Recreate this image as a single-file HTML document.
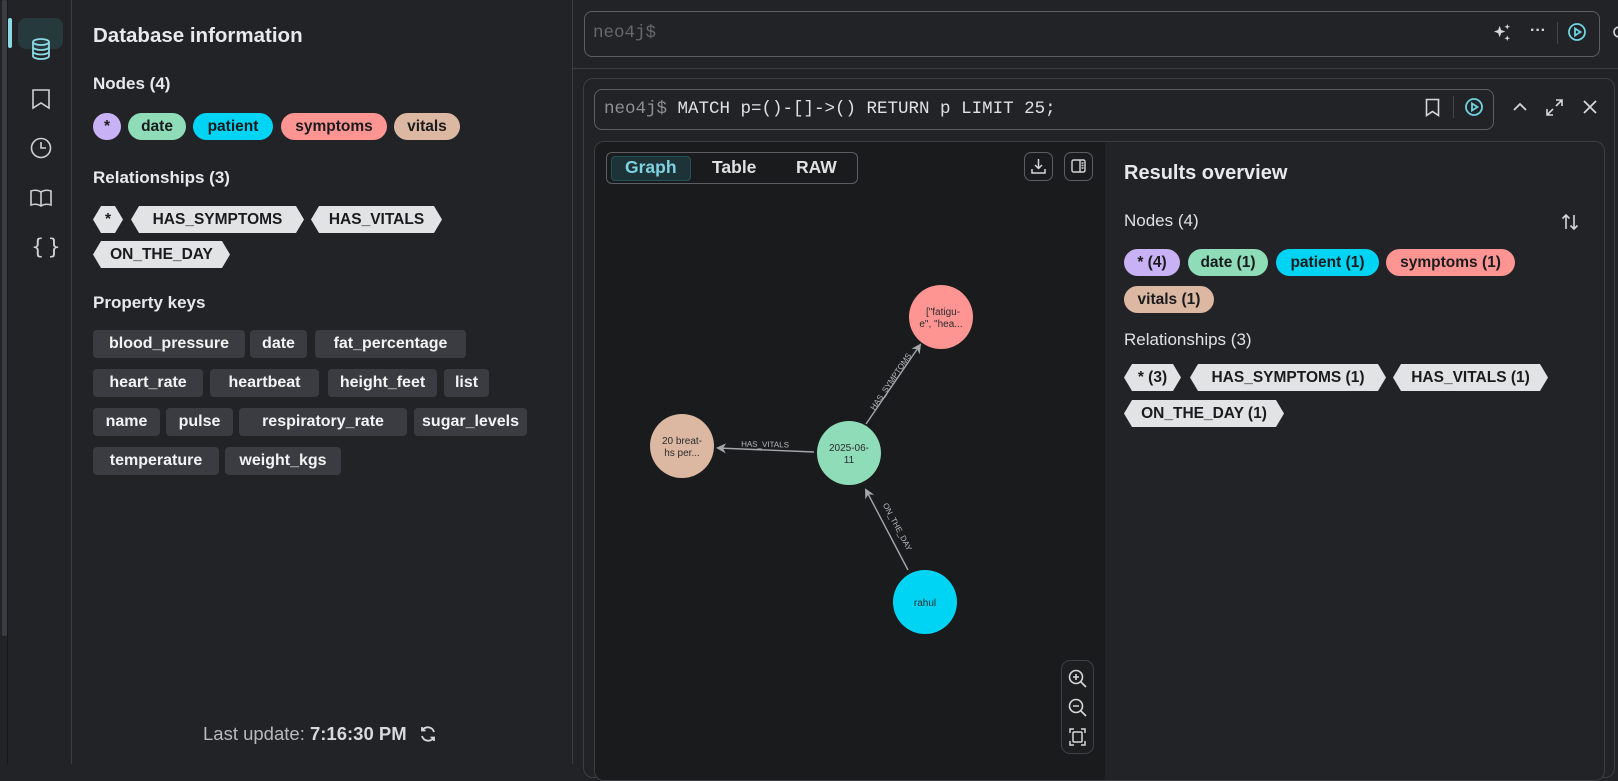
<!DOCTYPE html>
<html><head><meta charset="utf-8">
<style>
*{box-sizing:border-box;margin:0;padding:0}
body{width:1618px;height:764px;overflow:hidden;background:#222326;font-family:"Liberation Sans",sans-serif;color:#e8e9ea;position:relative}
.abs{position:absolute}
.pill{position:absolute;height:27px;border-radius:14px;color:#1a1b1d;font-weight:bold;font-size:15.5px;line-height:27px;text-align:center}
.hex{position:absolute;height:27px;background:#e2e3e5;color:#1a1b1d;font-weight:bold;font-size:15.5px;line-height:27px;text-align:center;clip-path:polygon(8px 0,calc(100% - 8px) 0,100% 50%,calc(100% - 8px) 100%,8px 100%,0 50%)}
.key{position:absolute;height:28px;background:#3a3c41;border-radius:4px;color:#f2f3f4;font-weight:bold;font-size:16px;line-height:28px;text-align:center;white-space:nowrap}
.h{position:absolute;font-weight:bold;font-size:17px;color:#e8e9ea}
svg{position:absolute;overflow:visible}
</style></head><body>
<!-- rail -->
<div class="abs" style="left:0;top:0;width:72px;height:764px;background:#222326;border-right:1px solid #3c3d42"></div>
<div class="abs" style="left:2px;top:0;width:5px;height:636px;background:#3b3c42;border-radius:2px"></div>
<div class="abs" style="left:7px;top:0;width:1px;height:764px;background:#17181a"></div>
<div class="abs" style="left:8px;top:18px;width:4px;height:30px;background:#8ad9e4;border-radius:2px"></div>
<div class="abs" style="left:18px;top:18px;width:45px;height:31px;background:#26393c;border-radius:8px"></div>
<svg style="left:29px;top:37px" width="24" height="24" viewBox="0 0 24 24" fill="none" stroke="#8ad9e4" stroke-width="1.8"><ellipse cx="12" cy="5" rx="8" ry="3"/><path d="M4 5v14c0 1.7 3.6 3 8 3s8-1.3 8-3V5M4 10c0 1.7 3.6 3 8 3s8-1.3 8-3M4 14.5c0 1.7 3.6 3 8 3s8-1.3 8-3"/></svg>
<svg style="left:31px;top:88px" width="20" height="22" viewBox="0 0 20 22" fill="none" stroke="#cfd0d2" stroke-width="1.6"><path d="M2 2h16v18l-8-5-8 5z"/></svg>
<svg style="left:30px;top:137px" width="22" height="22" viewBox="0 0 22 22" fill="none" stroke="#cfd0d2" stroke-width="1.6"><circle cx="11" cy="11" r="9.5"/><path d="M11 5v6h5"/></svg>
<svg style="left:29px;top:188px" width="24" height="20" viewBox="0 0 24 20" fill="none" stroke="#cfd0d2" stroke-width="1.6"><path d="M12 4C9 2 5 2 2 3v14c3-1 7-1 10 1 3-2 7-2 10-1V3c-3-1-7-1-10 1zM12 4v14"/></svg>
<div class="abs" style="left:31px;top:235px;font-size:21px;color:#cfd0d2;font-family:'DejaVu Sans',sans-serif;letter-spacing:3px">{}</div>

<!-- sidebar -->
<div class="abs" style="left:572px;top:0;width:1px;height:764px;background:#3c3d42"></div>
<div class="abs" style="left:93px;top:24px;font-weight:bold;font-size:20.5px">Database information</div>
<div class="h" style="left:93px;top:74px">Nodes (4)</div>
<div class="pill" style="left:93px;top:113px;width:28px;background:#c9b1f5">*</div>
<div class="pill" style="left:128px;top:113px;width:58px;background:#8fdcb9">date</div>
<div class="pill" style="left:193px;top:113px;width:80px;background:#00d4f5">patient</div>
<div class="pill" style="left:281px;top:113px;width:106px;background:#ff9593">symptoms</div>
<div class="pill" style="left:394px;top:113px;width:66px;background:#dcb8a2">vitals</div>
<div class="h" style="left:93px;top:168px">Relationships (3)</div>
<div class="hex" style="left:93px;top:206px;width:30px">*</div>
<div class="hex" style="left:131px;top:206px;width:173px">HAS_SYMPTOMS</div>
<div class="hex" style="left:311px;top:206px;width:131px">HAS_VITALS</div>
<div class="hex" style="left:93px;top:241px;width:137px">ON_THE_DAY</div>
<div class="h" style="left:93px;top:293px">Property keys</div>
<div class="key" style="left:93px;top:330px;width:152px">blood_pressure</div>
<div class="key" style="left:250px;top:330px;width:57px">date</div>
<div class="key" style="left:315px;top:330px;width:151px">fat_percentage</div>
<div class="key" style="left:93px;top:369px;width:110px">heart_rate</div>
<div class="key" style="left:210px;top:369px;width:109px">heartbeat</div>
<div class="key" style="left:328px;top:369px;width:109px">height_feet</div>
<div class="key" style="left:444px;top:369px;width:45px">list</div>
<div class="key" style="left:93px;top:408px;width:67px">name</div>
<div class="key" style="left:166px;top:408px;width:67px">pulse</div>
<div class="key" style="left:239px;top:408px;width:168px">respiratory_rate</div>
<div class="key" style="left:414px;top:408px;width:113px">sugar_levels</div>
<div class="key" style="left:93px;top:447px;width:126px">temperature</div>
<div class="key" style="left:225px;top:447px;width:116px">weight_kgs</div>
<div class="abs" style="left:203px;top:723px;font-size:18.5px;color:#b8b9bc">Last update: <b style="color:#d8d9db">7:16:30 PM</b></div>
<svg style="left:419px;top:725px" width="18" height="18" viewBox="0 0 18 18" fill="none" stroke="#d8d9db" stroke-width="1.8"><path d="M15 7A6.5 6.5 0 0 0 3.5 5M3 11a6.5 6.5 0 0 0 11.5 2M3 2v3.5h3.5M15 16v-3.5h-3.5"/></svg>

<!-- main top -->
<div class="abs" style="left:573px;top:0;width:1045px;height:69px;background:#222326;border-bottom:1px solid #3c3d42"></div>
<div class="abs" style="left:584px;top:11px;width:1016px;height:46px;border:1px solid #5c5e63;border-radius:8px"></div>
<div class="abs" style="left:593px;top:23px;font-family:'Liberation Mono',monospace;font-size:17.5px;color:#66686c">neo4j$</div>
<svg style="left:1493px;top:23px" width="19" height="19" viewBox="0 0 20 20" fill="#d6d7d9"><path d="M7 3l1.6 4.4L13 9l-4.4 1.6L7 15l-1.6-4.4L1 9l4.4-1.6zM15 1l.8 2.2L18 4l-2.2.8L15 7l-.8-2.2L12 4l2.2-.8zM15 13l.8 2.2L18 16l-2.2.8L15 19l-.8-2.2L12 16l2.2-.8z"/></svg>
<div class="abs" style="left:1530px;top:22px;font-size:16px;color:#d6d7d9;font-weight:bold">···</div>
<div class="abs" style="left:1557px;top:22px;width:1px;height:22px;background:#45474b"></div>
<svg style="left:1568px;top:23px" width="18" height="18" viewBox="0 0 18 18" fill="none" stroke="#6fd3e2" stroke-width="1.8"><circle cx="9" cy="9" r="8"/><path d="M7 5.5v7l5.5-3.5z"/></svg>
<svg style="left:1611px;top:24px" width="14" height="16" viewBox="0 0 14 16" fill="none" stroke="#d6d7d9" stroke-width="1.6"><circle cx="8" cy="8" r="5"/></svg>

<!-- card -->
<div class="abs" style="left:583px;top:78px;width:1032px;height:700px;border:1px solid #3c3d42;border-radius:10px;background:#222326"></div>
<div class="abs" style="left:594px;top:89px;width:900px;height:41px;border:1px solid #5c5e63;border-radius:8px"></div>
<div class="abs" style="left:604px;top:99px;font-family:'Liberation Mono',monospace;font-size:17.5px;color:#e0e1e3;white-space:pre"><span style="color:#8e9094">neo4j$</span> MATCH p=()-[]-&gt;() RETURN p LIMIT 25;</div>
<svg style="left:1425px;top:98px" width="15" height="19" viewBox="0 0 15 19" fill="none" stroke="#d6d7d9" stroke-width="1.6"><path d="M1.5 1.5h12v16l-6-4-6 4z"/></svg>
<div class="abs" style="left:1453px;top:96px;width:1px;height:22px;background:#45474b"></div>
<svg style="left:1465px;top:98px" width="18" height="18" viewBox="0 0 18 18" fill="none" stroke="#6fd3e2" stroke-width="1.8"><circle cx="9" cy="9" r="8"/><path d="M7 5.5v7l5.5-3.5z"/></svg>
<svg style="left:1513px;top:102px" width="14" height="9" viewBox="0 0 14 9" fill="none" stroke="#d6d7d9" stroke-width="1.8"><path d="M1 8l6-6 6 6"/></svg>
<svg style="left:1546px;top:99px" width="17" height="17" viewBox="0 0 17 17" fill="none" stroke="#d6d7d9" stroke-width="1.6"><path d="M10 1h6v6M16 1l-6 6M7 16H1v-6M1 16l6-6"/></svg>
<svg style="left:1583px;top:100px" width="14" height="14" viewBox="0 0 14 14" fill="none" stroke="#d6d7d9" stroke-width="1.8"><path d="M1 1l12 12M13 1L1 13"/></svg>

<!-- result area -->
<div class="abs" style="left:594px;top:141px;width:1011px;height:640px;border:1px solid #3c3d42;border-radius:10px;overflow:hidden;background:#222326">
  <div class="abs" style="left:0;top:0;width:510px;height:640px;background:#1a1b1d"></div>
</div>
<div class="abs" style="left:606px;top:152px;width:252px;height:32px;border:1px solid #5c5e63;border-radius:6px"></div>
<div class="abs" style="left:611px;top:156px;width:80px;height:25px;background:#1d3338;border:1px solid #24505a;border-radius:4px"></div>
<div class="abs" style="left:625px;top:157px;font-weight:bold;font-size:17.5px;color:#7fd3e0">Graph</div>
<div class="abs" style="left:712px;top:157px;font-weight:bold;font-size:17.5px;color:#e0e1e3">Table</div>
<div class="abs" style="left:796px;top:157px;font-weight:bold;font-size:17.5px;color:#e0e1e3">RAW</div>
<div class="abs" style="left:1024px;top:152px;width:29px;height:29px;border:1px solid #5c5e63;border-radius:7px"></div>
<svg style="left:1031px;top:158px" width="15" height="16" viewBox="0 0 15 16" fill="none" stroke="#d6d7d9" stroke-width="1.5"><path d="M7.5 1v9M4 7l3.5 3.5L11 7M1 11v4h13v-4"/></svg>
<div class="abs" style="left:1064px;top:152px;width:29px;height:29px;border:1px solid #5c5e63;border-radius:7px"></div>
<svg style="left:1071px;top:159px" width="15" height="14" viewBox="0 0 15 14" fill="none" stroke="#d6d7d9" stroke-width="1.4"><rect x="1" y="1" width="13" height="12" rx="1.5"/><path d="M9 1v12M10.5 4h2M10.5 6.5h2M10.5 9h2"/></svg>

<!-- graph -->
<svg style="left:0;top:0" width="1618" height="764">
  <defs><marker id="a" markerWidth="10" markerHeight="10" refX="8" refY="5" orient="auto" markerUnits="userSpaceOnUse"><path d="M0 0L10 5 0 10 3 5z" fill="#a5a7ab"/></marker></defs>
  <g stroke="#a5a7ab" stroke-width="1.4">
    <line x1="866" y1="424" x2="920" y2="345" marker-end="url(#a)"/>
    <line x1="814" y1="452" x2="718" y2="448" marker-end="url(#a)"/>
    <line x1="908" y1="570" x2="866" y2="490" marker-end="url(#a)"/>
  </g>
  <g font-family="Liberation Sans,sans-serif" font-size="8" fill="#b8babd">
    <text x="765" y="447" text-anchor="middle" transform="rotate(1 765 447)">HAS_VITALS</text>
    <text x="893" y="383" text-anchor="middle" transform="rotate(-56 893 383)">HAS_SYMPTOMS</text>
    <text x="895" y="528" text-anchor="middle" transform="rotate(62 895 528)">ON_THE_DAY</text>
  </g>
  <circle cx="941" cy="317" r="32" fill="#ff9593"/>
  <circle cx="682" cy="446" r="32" fill="#dcb8a2"/>
  <circle cx="849" cy="453" r="32" fill="#8fdcb9"/>
  <circle cx="925" cy="602" r="32" fill="#00d4f5"/>
  <g font-family="Liberation Sans,sans-serif" font-size="10" fill="#2a2b2e" text-anchor="middle">
    <text x="943" y="315">["fatigu-</text><text x="941" y="327">e", "hea...</text>
    <text x="682" y="444">20 breat-</text><text x="682" y="456">hs per...</text>
    <text x="849" y="451">2025-06-</text><text x="849" y="463">11</text>
    <text x="925" y="606">rahul</text>
  </g>
</svg>
<div class="abs" style="left:1061px;top:660px;width:33px;height:94px;border:1px solid #3f4045;border-radius:9px;background:#1d1e20"></div>
<svg style="left:1068px;top:669px" width="19" height="19" viewBox="0 0 19 19" fill="none" stroke="#d6d7d9" stroke-width="1.6"><circle cx="8" cy="8" r="6.5"/><path d="M13 13l5 5M8 5v6M5 8h6"/></svg>
<svg style="left:1068px;top:698px" width="19" height="19" viewBox="0 0 19 19" fill="none" stroke="#d6d7d9" stroke-width="1.6"><circle cx="8" cy="8" r="6.5"/><path d="M13 13l5 5M5 8h6"/></svg>
<svg style="left:1069px;top:728px" width="17" height="18" viewBox="0 0 17 18" fill="none" stroke="#d6d7d9" stroke-width="1.5"><path d="M1 5V1h4M12 1h4v4M16 13v4h-4M5 17H1v-4"/><rect x="4" y="4" width="9" height="10" rx="1"/></svg>

<!-- overview -->
<div class="abs" style="left:1124px;top:162px;font-weight:bold;font-size:20px">Results overview</div>
<div class="abs" style="left:1124px;top:211px;font-size:17px;color:#e0e1e3">Nodes (4)</div>
<svg style="left:1561px;top:213px" width="18" height="18" viewBox="0 0 18 18" fill="none" stroke="#d6d7d9" stroke-width="1.6"><path d="M5 16V2M1.5 5.5L5 2l3.5 3.5M13 2v14M9.5 12.5L13 16l3.5-3.5"/></svg>
<div class="pill" style="left:1124px;top:249px;width:56px;background:#c9b1f5">* (4)</div>
<div class="pill" style="left:1188px;top:249px;width:80px;background:#8fdcb9">date (1)</div>
<div class="pill" style="left:1276px;top:249px;width:103px;background:#00d4f5">patient (1)</div>
<div class="pill" style="left:1386px;top:249px;width:129px;background:#ff9593">symptoms (1)</div>
<div class="pill" style="left:1124px;top:286px;width:90px;background:#dcb8a2">vitals (1)</div>
<div class="abs" style="left:1124px;top:330px;font-size:17px;color:#e0e1e3">Relationships (3)</div>
<div class="hex" style="left:1124px;top:364px;width:57px">* (3)</div>
<div class="hex" style="left:1190px;top:364px;width:196px">HAS_SYMPTOMS (1)</div>
<div class="hex" style="left:1393px;top:364px;width:155px">HAS_VITALS (1)</div>
<div class="hex" style="left:1124px;top:400px;width:160px">ON_THE_DAY (1)</div>
</body></html>
